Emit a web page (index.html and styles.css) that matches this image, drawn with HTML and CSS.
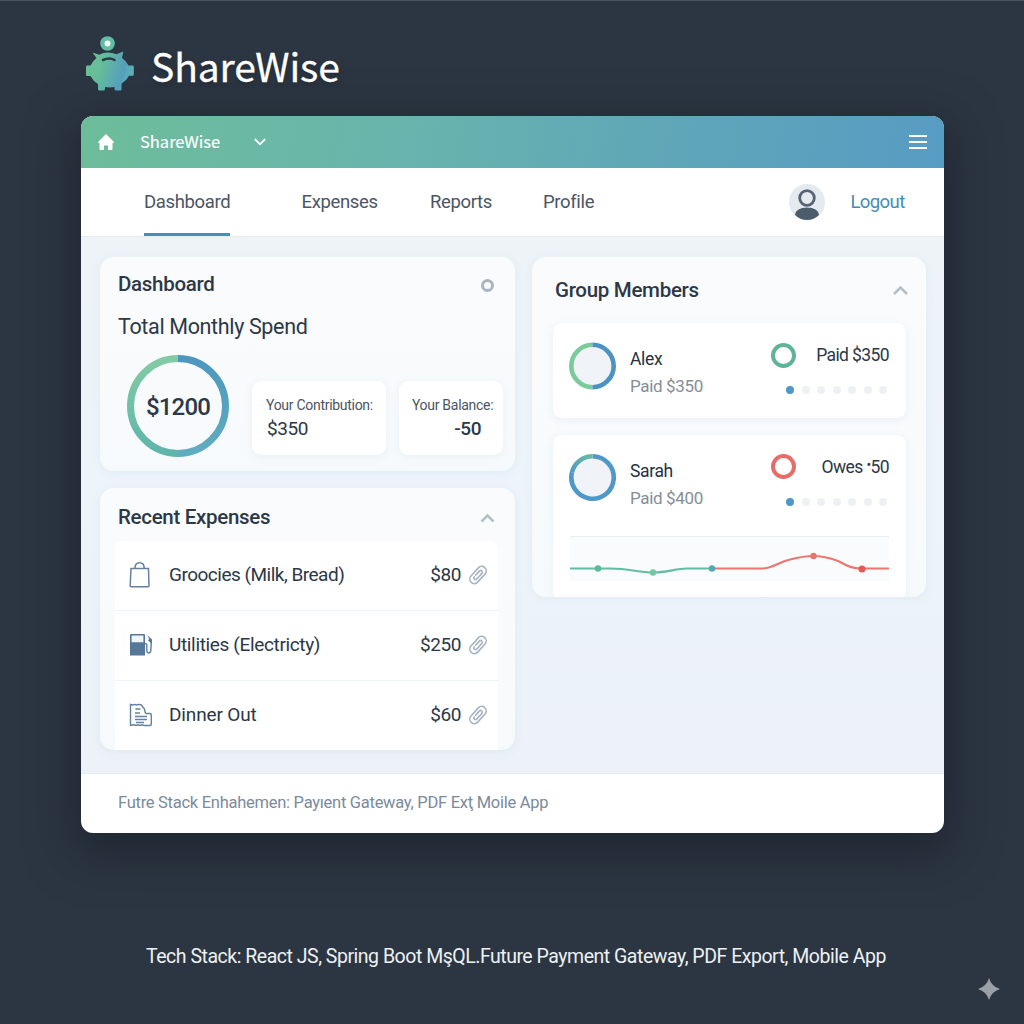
FILE: index.html
```html
<!DOCTYPE html>
<html lang="en">
<head>
<meta charset="utf-8">
<title>ShareWise</title>
<link rel="stylesheet" href="styles.css">
</head>
<body>
<svg class="defs" width="0" height="0" aria-hidden="true">
  <defs>
    <linearGradient id="pig" x1="0" y1="0" x2="1" y2="0.25"><stop offset="0.35" stop-color="#66bf98"/><stop offset="0.85" stop-color="#559fbd"/><stop offset="1" stop-color="#5bb0b4"/></linearGradient>
    <linearGradient id="green" x1="0" y1="0" x2="0" y2="1"><stop offset="0" stop-color="#82cba4"/><stop offset="1" stop-color="#5fb5ac"/></linearGradient>
    <linearGradient id="blue" x1="0" y1="0" x2="0" y2="1"><stop offset="0" stop-color="#4d97bf"/><stop offset="1" stop-color="#60adc0"/></linearGradient>
    <linearGradient id="arc" x1="1" y1="0" x2="0" y2="1"><stop offset="0" stop-color="#68bd9d"/><stop offset="1" stop-color="#5299c8"/></linearGradient>
    <symbol id="clip" viewBox="0 0 20 20"><g transform="rotate(42 10 10)" fill="none" stroke="#a6b4c2" stroke-width="1.6" stroke-linecap="round"><rect x="5.5" y="0" width="9" height="20" rx="4.5"/><path d="M8.4 11.5V6.2a1.7 1.7 0 0 1 3.4 0v7.6a1.7 1.7 0 0 1-3.4 0"/></g></symbol>
  </defs>
</svg>

<header class="brand">
  <svg class="pig" width="50" height="58" viewBox="0 0 50 58">
    <circle cx="21.500" cy="8.500" r="7.300" fill="#63bda3"/><circle cx="21.500" cy="8.500" r="3" fill="#eefaf6"/>
    <path fill="url(#pig)" d="M7.500 17.800l5.500 2q8.500-4.500 17.500-.5l6-2.500q1-.3.700.700l-1.200 5.500q4.500 3 6.500 7.500h4q1.300 0 1.300 1.300v7.700q0 1.300-1.300 1.300h-3.500q-2.500 5-7.500 8v5.200q0 1.500-1.500 1.500h-4q-1.500 0-1.500-1.500v-2q-5 .8-9.500 0v2q0 1.500-1.500 1.500h-4q-1.500 0-1.500-1.500v-5q-5-3-7.500-8H1.300Q0 41 0 39.700v-8q0-1.300 1.300-1.300H4.500q2-4.500 6-7.500l-3.300-4.500q-.3-.8.300-.6z"/>
    <path d="M17 25q6.500-3 11.500 0" fill="none" stroke="#2b3944" stroke-width="2.600" stroke-linecap="round"/>
  </svg>
  <h1 class="brand-name">ShareWise</h1>
</header>

<main class="window">
  <div class="topbar">
    <svg class="home" width="16" height="16" viewBox="0 0 16 16"><path d="M8 0l8 8-1 1.200h-.5V15q0 1-1 1H10v-4.500H6V16H2.500q-1 0-1-1V9.200H1L0 8z" fill="#fff"/></svg>
    <span class="app-name">ShareWise</span>
    <svg class="down" width="12" height="8" viewBox="0 0 12 8"><path d="M.8 1l5.200 5.300L11.200 1" fill="none" stroke="#fff" stroke-width="1.800"/></svg>
    <div class="burger"><i></i><i></i><i></i></div>
  </div>

  <nav class="nav">
    <a class="tab active">Dashboard</a>
    <a class="tab expenses">Expenses</a>
    <a class="tab reports">Reports</a>
    <a class="tab profile">Profile</a>
    <svg class="avatar" width="36" height="36" viewBox="0 0 36 36"><circle cx="18" cy="18" r="18" fill="#e5eaf0"/><circle cx="18" cy="14" r="7.300" fill="#e5eaf0" stroke="#566574" stroke-width="2.800"/><path d="M6 31q1-7.500 12-7.500T30 31q-5 5-12 5T6 31z" fill="#4d5c6b"/></svg>
    <a class="logout">Logout</a>
  </nav>

  <div class="content">
    <div class="left">
      <section class="card summary">
        <div class="card-head"><h2>Dashboard</h2><span class="dot-ring"></span></div>
        <h3>Total Monthly Spend</h3>
        <div class="stats">
          <div class="total">
            <svg width="102" height="102" viewBox="0 0 102 102" fill="none" stroke-width="7"><path d="M51 98.500a47.500 47.500 0 0 1 0-95" stroke="url(#green)"/><path d="M51 3.500a47.500 47.500 0 0 1 0 95" stroke="url(#blue)"/></svg>
            <strong>$1200</strong>
          </div>
          <div class="stat contribution"><span>Your Contribution:</span><b>$350</b></div>
          <div class="stat balance"><span>Your Balance:</span><b>-50</b></div>
        </div>
      </section>

      <section class="card recent">
        <div class="card-head"><h2>Recent Expenses</h2><svg width="15" height="10" viewBox="0 0 15 10"><path d="M1.500 8.500l6-6 6 6" fill="none" stroke="#b4bec8" stroke-width="2.500"/></svg></div>
        <ul class="list">
          <li>
            <svg class="kind" width="24" height="26" viewBox="0 0 24 26" fill="none" stroke="#64829f" stroke-width="1.500"><path d="M2 6.500h17.500l.5 17.300q0 1-1 1H2.200q-1 0-1-1z"/><path d="M6 6.500q0-5.700 4.600-5.700t4.600 5.700"/></svg>
            <span class="what groceries">Groocies (Milk, Bread)</span><span class="amount">$80</span><svg class="clip" width="20" height="20"><use href="#clip"/></svg>
          </li>
          <li>
            <svg class="kind" width="24" height="26" viewBox="0 0 24 26"><path d="M1 3q0-1 1-1h13q1 0 1 1v20.500H1z" fill="#577799"/><path d="M2.600 3.600h11.800v6.600H2.600z" fill="#eff4f8"/><path d="M16 11.500q1.800 0 1.800 2V18q0 3 2 3t2-3l.5-8" fill="none" stroke="#6484a3" stroke-width="1.500"/><path d="M18.300 3l4.700 4.500v4.300l-4-3.300 1.200-1.500z" fill="#577799"/></svg>
            <span class="what utilities">Utilities (Electricty)</span><span class="amount">$250</span><svg class="clip" width="20" height="20"><use href="#clip"/></svg>
          </li>
          <li>
            <svg class="kind" width="24" height="26" viewBox="0 0 24 26" fill="none" stroke="#64829f" stroke-width="1.400"><path d="M16.500 11.500H21q1.300 0 1.300 1.300V22q0 1.500-1.500 1.500H15l-2-.7-2 .7-2-.7-2 .7-2-.7-3.500.7V2.500l2 .5 2-.6 2 .6 2-.6 2.500.3 3.500 4.300 1 4.500"/><path d="M6.500 7h5M6 11h5M6 14.500h12M6 17.500h12M7 20.500h8"/></svg>
            <span class="what dinner">Dinner Out</span><span class="amount">$60</span><svg class="clip" width="20" height="20"><use href="#clip"/></svg>
          </li>
        </ul>
      </section>
    </div>

    <section class="card members">
      <div class="card-head"><h2>Group Members</h2><svg width="15" height="10" viewBox="0 0 15 10"><path d="M1 9l6.500-6.500L14 9" fill="none" stroke="#b4bec8" stroke-width="2.500"/></svg></div>
      <article class="member">
        <div class="member-row">
          <svg width="48" height="48" viewBox="0 0 48 48" fill="none" stroke-width="4.600"><circle cx="23.500" cy="24" r="21" fill="#f0f3f7"/><path d="M23.500 45.200a21.200 21.200 0 0 1 0-42.400" stroke="#7aca9c"/><path d="M23.500 2.800a21.200 21.200 0 0 1 0 42.400" stroke="#4c92c3"/></svg>
          <div class="who"><span class="name">Alex</span><span class="paid">Paid $350</span></div>
          <span class="ring ok"></span>
          <div class="state"><span>Paid $350</span><div class="pager"><i class="on"></i><i></i><i></i><i></i><i></i><i></i><i></i></div></div>
        </div>
      </article>
      <article class="member last">
        <div class="member-row">
          <svg width="48" height="48" viewBox="0 0 48 48" fill="none" stroke-width="4.600"><circle cx="23.500" cy="23.500" r="21" fill="#f0f3f7"/><path d="M23.500 2.300a21.200 21.200 0 1 1-20.500 16" stroke="#5098c8"/><path d="M3 18.300A21.200 21.200 0 0 1 23.500 2.300" stroke="url(#arc)"/></svg>
          <div class="who"><span class="name">Sarah</span><span class="paid">Paid $400</span></div>
          <span class="ring due"></span>
          <div class="state"><span>Owes <sup>•</sup>50</span><div class="pager"><i class="on"></i><i></i><i></i><i></i><i></i><i></i><i></i></div></div>
        </div>
        <div class="chart">
          <svg width="319" height="45" viewBox="0 0 319 45" fill="none" stroke-width="2.200">
            <path d="M0 31.500h40c20 0 28 4 43 4s22-4 34-4h26" stroke="#62bda2"/>
            <path d="M142 31.500h50c10 0 16-6 28-9 8-2 14-3.500 23-3.500s17 2 25 5c8 4 12 7.500 24 7.500h27" stroke="#ec7771"/>
            <circle cx="28" cy="31.500" r="3.200" fill="#5bbb9d"/><circle cx="83" cy="35.500" r="3.200" fill="#71c7a6"/><circle cx="142" cy="31.500" r="3.200" fill="#55a8af"/><circle cx="243.500" cy="19" r="3.200" fill="#ea736d"/><circle cx="292" cy="32" r="3.500" fill="#df5c59"/>
          </svg>
        </div>
      </article>
    </section>
  </div>

  <footer class="window-foot"><span>Futre Stack Enhahemen: Payıent Gateway, PDF Exţ Moile App</span></footer>
</main>

<footer class="tech"><span>Tech Stack: React JS, Spring Boot MşQL.Future Payment Gateway, PDF Export, Mobile App</span></footer>
<svg class="spark" width="22" height="22" viewBox="0 0 22 22"><path d="M11 0q2.500 8.500 11 11-8.500 2.500-11 11-2.500-8.500-11-11 8.500-2.500 11-11z" fill="#9b9fa7"/></svg>
</body>
</html>
```

FILE: styles.css
```css
* { box-sizing: border-box; margin: 0; padding: 0; }
html, body { width: 1024px; height: 1024px; overflow: hidden; }
body {
  background: #2c3642;
  border-top: 1px solid #465360;
  color: #2c3846;
  font-family: Roboto, "Liberation Sans", sans-serif;
  white-space: nowrap;
}
svg { display: block; flex: none; }
.defs { position: absolute; }
h1, h2, h3 { font-weight: 400; }

.brand { height: 115px; display: flex; padding: 34px 0 0 86px; gap: 15px; }
.brand-name {
  font: 400 39px/60px "Noto Sans CJK JP", "Noto Sans", sans-serif;
  color: #fff;
  -webkit-text-stroke: .3px #fff;
  letter-spacing: -.1px;
  text-shadow: 0 2px 4px rgba(0, 0, 0, .25);
}

.window {
  width: 863px; height: 717px; margin-left: 81px;
  border-radius: 12px; overflow: hidden;
  display: flex; flex-direction: column;
  box-shadow: 0 14px 46px 8px rgba(20, 25, 33, .5);
  background: #fff;
}
.topbar {
  height: 52px; display: flex; align-items: center; padding: 0 17px;
  background: linear-gradient(100deg, #6dbd9a 0%, #69b5ac 35%, #60a6b8 68%, #579cc3 100%);
}
.app-name {
  width: 114px; margin-left: 26px; padding-bottom: 2px;
  font: 400 16.5px/24px "Noto Sans CJK JP", "Noto Sans", sans-serif; color: #fff;
  -webkit-text-stroke: .15px #fff;
}
.burger { margin-left: auto; width: 18px; display: flex; flex-direction: column; gap: 4px; }
.burger i { height: 2px; background: #fff; }

.nav { height: 68px; display: flex; align-items: center; padding-left: 63px; font-size: 18.5px; letter-spacing: -.35px; color: #4a5664; }
.tab { height: 68px; line-height: 68px; }
.active { width: 86px; border-bottom: 3px solid #458eb5; margin-right: 71.500px; }
.expenses { width: 128.500px; }
.reports { width: 113px; }
.profile { width: 113px; }
.avatar { margin-left: 132.500px; }
.logout { margin-left: 26px; margin-top: -1px; color: #3f8eb6; letter-spacing: -.6px; }

.content {
  flex: 1; display: flex; align-items: flex-start; gap: 17px; padding: 20px 18px 0 19px;
  background: linear-gradient(180deg, #edf3f7, #edf4fa 45%, #ecf2f7);
  border-top: 1px solid #e6edf1;
}
.left { width: 415px; display: flex; flex-direction: column; gap: 17px; }
.card {
  border-radius: 14px; background: linear-gradient(180deg, #fafbfc, #f7fafc);
  box-shadow: 0 2px 10px rgba(120, 170, 200, .1); overflow: hidden;
}
.card-head { display: flex; justify-content: space-between; align-items: center; }
h2 { font-size: 20.5px; font-weight: 500; letter-spacing: -.3px; }

.summary { height: 214px; padding: 14px 12px 0 18px; }
.summary .card-head { height: 26px; padding-right: 9.500px; }
.dot-ring { width: 13px; height: 13px; border: 3.500px solid #a8b4c0; border-radius: 50%; margin-top: 3px; }
h3 { font-size: 21.5px; line-height: 28px; margin-top: 16px; letter-spacing: -.35px; }
.stats { display: flex; align-items: flex-end; padding: 0 0 0 9px; margin-top: 14px; height: 102px; }
.total { width: 102px; height: 102px; display: grid; margin-right: 23px; flex: none; }
.total svg, .total strong { grid-area: 1 / 1; }
.total strong { font-size: 24px; font-weight: 500; line-height: 105px; text-align: center; letter-spacing: -.8px; }
.stat { height: 74px; border-radius: 9px; background: #fff; box-shadow: 0 2px 8px rgba(100, 150, 180, .1); display: flex; flex-direction: column; padding: 14px 0 0 14px; margin-bottom: 2px; }
.contribution { width: 135px; }
.balance { width: 104px; margin-left: 13px; padding-left: 12.500px; }
.stat span { font-size: 14px; line-height: 20px; letter-spacing: -.29px; color: #4a5562; }
.stat b { font-size: 19px; font-weight: 400; line-height: 27px; letter-spacing: -.45px; }
.contribution b { padding-left: 1px; }
.balance b { text-align: right; padding-right: 22px; font-weight: 500; }

.recent { height: 262px; }
.recent .card-head { height: 53px; padding: 4px 20px 0 18px; }
.recent .card-head svg { margin-top: 2px; }
.list { list-style: none; width: 383px; margin-left: 15px; background: #fff; border-radius: 8px 8px 0 0; }
.list li { height: 70px; display: flex; align-items: center; padding: 0 10px 2px 14px; border-bottom: 1.500px solid #eff4f8; font-size: 19px; }
.list li:last-child { border-bottom-color: #fff; }
.what { margin-left: 16px; }
.groceries { letter-spacing: -.5px; }
.utilities { letter-spacing: -.35px; }
.dinner { letter-spacing: -.15px; }
.amount { margin-left: auto; margin-right: 7px; letter-spacing: -.4px; }

.members { width: 394px; height: 340px; }
.members .card-head { height: 66px; padding: 0 18px 0 23px; }
.member { width: 353px; height: 95px; margin: 0 0 17px 21px; background: #fff; border-radius: 9px; padding: 0 17px 0 16px; box-shadow: 0 2px 8px rgba(100, 150, 180, .1); }
.member-row { display: flex; height: 95px; padding-top: 19px; }
.who { width: 141px; display: flex; flex-direction: column; margin-left: 13px; padding-top: 4px; line-height: 26px; }
.name { font-size: 17.5px; letter-spacing: -.35px; line-height: 27px; color: #263242; }
.paid { font-size: 17px; letter-spacing: -.35px; color: #848e98; }
.ring { width: 25px; height: 25px; border: 4px solid #5fb497; border-radius: 50%; flex: none; margin-top: 1px; }
.due { border-color: #e66c67; margin-top: 0; }
.state { margin-left: auto; width: 93px; text-align: right; font-size: 17.5px; letter-spacing: -.6px; line-height: 26px; }
.state sup { font-size: 14px; line-height: 0; vertical-align: 3px; }
.pager { display: flex; gap: 7.500px; justify-content: flex-end; margin: 17.500px 2px 0 0; }
.pager i { width: 8px; height: 8px; flex: none; border-radius: 50%; background: #edf1f5; }
.pager .on { background: #4b98c9; }
.last { height: 166px; margin-bottom: 0; }
.chart { height: 45px; margin: 6px 0 0 1px; background: #f9fbfc; border-top: 1px solid #e7eff2; }

.window-foot { height: 60px; border-top: 1px solid #e5edf2; padding-left: 37px; font-size: 16.5px; letter-spacing: -.27px; line-height: 57px; color: #7b8b9b; }
.tech { margin: 109px 0 0 146px; font-size: 19.5px; letter-spacing: -.48px; line-height: 30px; color: #edf1f3; }
.spark { position: absolute; left: 978px; top: 978px; }
```
